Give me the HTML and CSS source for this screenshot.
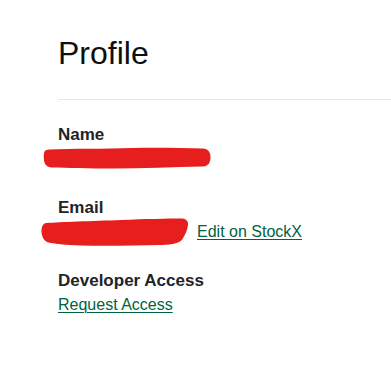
FILE: index.html
```html
<!DOCTYPE html>
<html lang="en">
<head>
<meta charset="utf-8">
<title>Profile</title>
<link rel="stylesheet" href="styles.css">
</head>
<body>
<main class="page">
  <h1 class="title">Profile</h1>
  <hr class="divider">
  <section class="fields">
    <div class="field">
      <div class="label">Name</div>
      <div class="value">
        <svg class="redact redact-name" width="168" height="22" viewBox="0 0 168 22" aria-hidden="true">
          <path d="M6 2.5 C30 1.5 60 2 90 1 C115 0.5 140 1 160 1.5 C165 2 167.5 5 167.5 10 C167.5 15 166 19 160 19.5 C130 20 100 21.5 70 21.5 C45 21.5 25 21 9 20.5 C3 20 1.5 17 1 13 C0.5 9 0.8 5 2 4 C3 3 4.5 2.6 6 2.5 Z" fill="#e61e1e"/>
        </svg>
      </div>
    </div>
    <div class="field">
      <div class="label">Email</div>
      <div class="value value-row">
        <svg class="redact redact-email" width="148" height="28" viewBox="0 0 148 28" aria-hidden="true">
          <path d="M5 5 C20 4 50 3 80 2 C105 1 125 0.5 140 0.5 C145 0.5 147.5 3 147 7 C146.5 12 144 17 141.5 21 C139 25 133 26.5 120 27 C95 27.5 65 28 40 27.5 C25 27 12 26 6 24 C2 22 0.5 17 0.5 13 C0.5 9 1.5 6 5 5 Z" fill="#e61e1e"/>
        </svg>
        <a class="link edit-link" href="#">Edit on StockX</a>
      </div>
    </div>
    <div class="field">
      <div class="label">Developer Access</div>
      <div class="value">
        <a class="link" href="#">Request Access</a>
      </div>
    </div>
  </section>
</main>
</body>
</html>
```

FILE: styles.css
```css
html, body {
  margin: 0;
  padding: 0;
  background: #ffffff;
}

body {
  font-family: "Liberation Sans", Arial, sans-serif;
  color: #1c1c1c;
}

.page {
  padding: 35px 0 0 58px;
}

.title {
  margin: 0;
  font-size: 32px;
  line-height: 36px;
  font-weight: 400;
  color: #0f0f0f;
}

.divider {
  margin: 28px 0 0 0;
  border: 0;
  height: 1px;
  background: #e6e6e6;
}

.fields {
  display: flex;
  flex-direction: column;
  gap: 27px;
  padding-top: 25px;
}

.field {
  display: flex;
  flex-direction: column;
  gap: 2px;
}

.label {
  font-size: 17px;
  line-height: 20px;
  font-weight: 700;
  color: #222326;
}

.value {
  font-size: 16px;
  line-height: 24px;
  height: 24px;
}

.value-row {
  display: flex;
  align-items: center;
}

.redact {
  display: block;
}

.redact-name {
  margin: 0 0 0 -15px;
}

.redact-email {
  margin: 0 0 0 -17px;
  position: relative;
  top: 0;
}

.link {
  color: #006340;
  text-decoration: underline;
  text-underline-offset: 2px;
  text-decoration-thickness: 1px;
}

.edit-link {
  margin-left: 8px;
}
```
